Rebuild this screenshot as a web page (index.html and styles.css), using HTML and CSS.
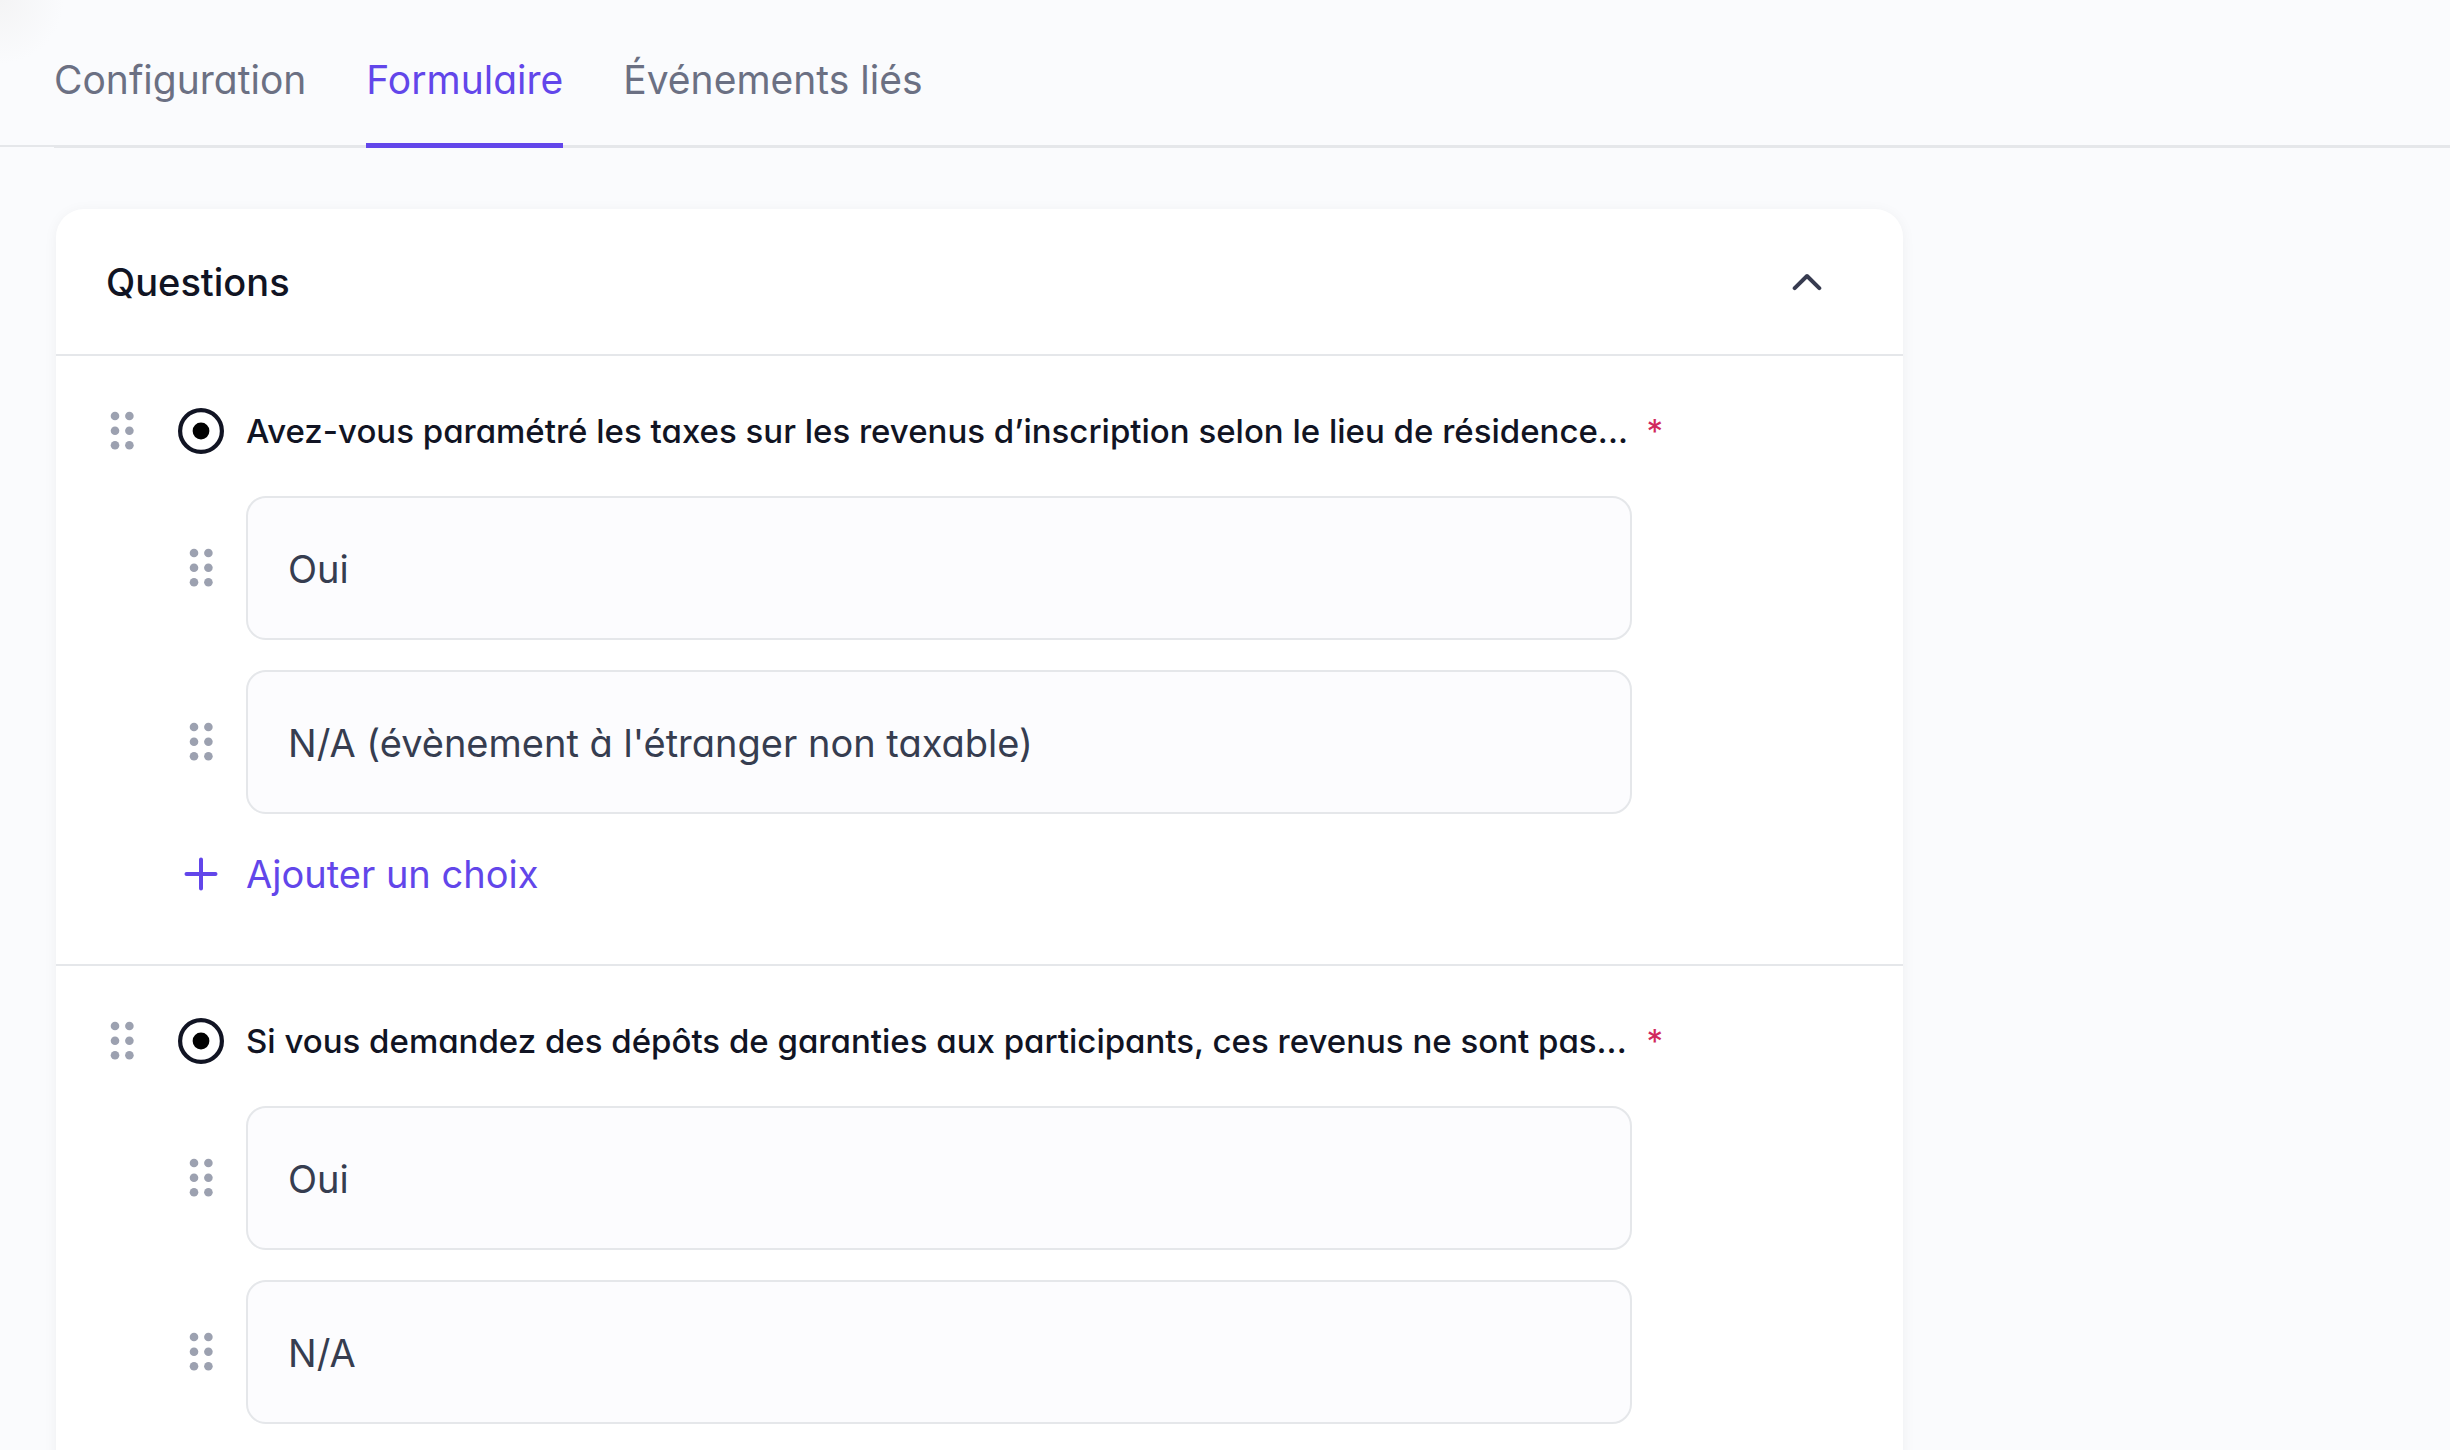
FILE: index.html
```
<!DOCTYPE html>
<html lang="fr">
<head>
<meta charset="utf-8">
<meta name="viewport" content="width=device-width, initial-scale=1">
<title>Formulaire</title>
<link rel="stylesheet" href="styles.css">
</head>
<body>
<svg class="sprite" aria-hidden="true">
  <symbol id="grip" viewBox="0 0 24 40">
    <circle cx="5" cy="5" r="4.3"/><circle cx="19.4" cy="5" r="4.3"/>
    <circle cx="5" cy="19.7" r="4.3"/><circle cx="19.4" cy="19.7" r="4.3"/>
    <circle cx="5" cy="34.3" r="4.3"/><circle cx="19.4" cy="34.3" r="4.3"/>
  </symbol>
  <symbol id="choice" viewBox="0 0 46 46">
    <circle cx="23" cy="23" r="20.9" fill="none" stroke="#111423" stroke-width="4.2"/>
    <circle cx="23" cy="23" r="8.4" fill="#000"/>
  </symbol>
</svg>

<header class="topbar">
  <nav class="tabs" aria-label="Sections">
    <a class="tab" href="#configuration">Configuration</a>
    <a class="tab tab-active" href="#formulaire" aria-current="page">Formulaire</a>
    <a class="tab" href="#evenements">Événements liés</a>
  </nav>
</header>

<main class="page">
  <section class="card">
    <header class="card-header">
      <h1 class="card-title">Questions</h1>
      <button class="icon-button" type="button" aria-label="Replier" aria-expanded="true">
        <svg class="chevron" viewBox="0 0 30 18" aria-hidden="true"><path d="M2.7 15.2 15 3l12.300 12.200"/></svg>
      </button>
    </header>

    <section class="question">
      <div class="question-head">
        <button class="grip-button" type="button" aria-label="Déplacer la question"><svg class="grip" aria-hidden="true"><use href="#grip"/></svg></button>
        <svg class="type-icon" role="img" aria-label="Choix unique"><use href="#choice"/></svg>
        <div class="question-label">
          <h2 class="question-title">Avez-vous paramétré les taxes sur les revenus d’inscription selon le lieu de résidence...</h2>
          <span class="required">*</span>
        </div>
      </div>
      <div class="choices">
        <div class="choice">
          <button class="grip-button" type="button" aria-label="Déplacer le choix"><svg class="grip" aria-hidden="true"><use href="#grip"/></svg></button>
          <input class="field" type="text" value="Oui" aria-label="Choix 1">
        </div>
        <div class="choice">
          <button class="grip-button" type="button" aria-label="Déplacer le choix"><svg class="grip" aria-hidden="true"><use href="#grip"/></svg></button>
          <input class="field" type="text" value="N/A (évènement à l'étranger non taxable)" aria-label="Choix 2">
        </div>
        <button class="add" type="button">
          <svg class="plus" viewBox="0 0 46 46" aria-hidden="true"><path d="M23 8.500v29M8.500 23h29"/></svg>
          Ajouter un choix
        </button>
      </div>
    </section>

    <section class="question">
      <div class="question-head">
        <button class="grip-button" type="button" aria-label="Déplacer la question"><svg class="grip" aria-hidden="true"><use href="#grip"/></svg></button>
        <svg class="type-icon" role="img" aria-label="Choix unique"><use href="#choice"/></svg>
        <div class="question-label">
          <h2 class="question-title">Si vous demandez des dépôts de garanties aux participants, ces revenus ne sont pas...</h2>
          <span class="required">*</span>
        </div>
      </div>
      <div class="choices">
        <div class="choice">
          <button class="grip-button" type="button" aria-label="Déplacer le choix"><svg class="grip" aria-hidden="true"><use href="#grip"/></svg></button>
          <input class="field" type="text" value="Oui" aria-label="Choix 1">
        </div>
        <div class="choice">
          <button class="grip-button" type="button" aria-label="Déplacer le choix"><svg class="grip" aria-hidden="true"><use href="#grip"/></svg></button>
          <input class="field" type="text" value="N/A" aria-label="Choix 2">
        </div>
      </div>
    </section>
  </section>
</main>
</body>
</html>
```
FILE: styles.css
```
:root {
  --accent: #6246ea;
  --line: #e5e7ea;
  --ink: #111423;
  --page: #fafbfd;
}

* { box-sizing: border-box; }

body {
  margin: 0;
  background: var(--page);
  color: var(--ink);
  font-family: Inter, "Liberation Sans", sans-serif;
  font-feature-settings: "cv11";
  font-size: 38px;
  line-height: 48px;
}

button, input {
  font: inherit;
  font-feature-settings: inherit;
}

button {
  padding: 0;
  border: 0;
  background: none;
  color: inherit;
  cursor: pointer;
}

.sprite { display: none; }

/* Tab bar */
.topbar {
  padding-left: 54px;
  background: radial-gradient(circle at 0 0, #f4f4f5, var(--page) 64px);
  box-shadow: inset 0 -1px var(--page), inset 0 -3px var(--line);
}

.tabs {
  display: flex;
  gap: 60px;
  border-bottom: 3px solid var(--line);
}

.tab {
  margin-bottom: -3px;
  padding: 56px 0 39px;
  border-bottom: 5px solid transparent;
  color: #6b7083;
  font-size: 39px;
  text-decoration: none;
}

.tab-active {
  border-color: var(--accent);
  color: var(--accent);
}

/* Card */
.page { padding: 61px 56px 0; }

.card {
  max-width: 1847px;
  min-height: calc(100vh - 209px);
  border-radius: 28px 28px 0 0;
  background: #fff;
  box-shadow: 0 2px 14px rgb(17 20 35 / 5%);
}

.card-header {
  display: flex;
  align-items: center;
  justify-content: space-between;
  padding: 49px 72px 48px 50px;
  border-bottom: 2px solid var(--line);
}

.card-title {
  margin: 0;
  font-size: 38px;
  font-weight: 500;
}

.icon-button {
  display: grid;
  place-items: center;
  width: 48px;
  height: 48px;
}

.chevron {
  width: 30px;
  height: 18px;
  fill: none;
  stroke: #373b50;
  stroke-width: 4;
  stroke-linecap: round;
  stroke-linejoin: round;
}

/* Questions */
.question { padding: 46px 0 60px 54px; }

.question + .question { border-top: 2px solid var(--line); }

.question-head {
  display: flex;
  align-items: center;
  gap: 22px;
  min-height: 58px;
  margin-bottom: 36px;
  padding-right: 240px;
}

.grip-button {
  display: grid;
  place-items: center;
  flex: none;
  width: 46px;
  height: 48px;
}

.question-head .grip-button {
  justify-items: start;
}

.grip {
  width: 24px;
  height: 40px;
  fill: #9ca1b0;
}

.type-icon {
  flex: none;
  width: 46px;
  height: 46px;
}

.question-label {
  display: flex;
  flex: 1;
  gap: 10px;
  min-width: 0;
  font-size: 33px;
}

.question-title {
  flex: 1;
  min-width: 0;
  margin: 0;
  overflow: hidden;
  font-size: inherit;
  font-weight: 500;
  text-overflow: ellipsis;
  white-space: nowrap;
}

.required { color: #d1295d; }

.choices {
  display: flex;
  flex-direction: column;
  align-items: stretch;
  gap: 30px;
  padding: 0 271px 0 68px;
}

.choice {
  display: flex;
  align-items: center;
  gap: 22px;
}

.field {
  flex: 1;
  min-width: 0;
  height: 144px;
  padding: 2px 40px 0;
  border: 2px solid var(--line);
  border-radius: 20px;
  background: #fcfcfe;
  color: #363d50;
}

.add {
  display: flex;
  align-items: center;
  align-self: flex-start;
  gap: 22px;
  height: 60px;
  color: var(--accent);
}

.plus {
  width: 46px;
  height: 46px;
  fill: none;
  stroke: currentColor;
  stroke-width: 4;
  stroke-linecap: round;
}
```
